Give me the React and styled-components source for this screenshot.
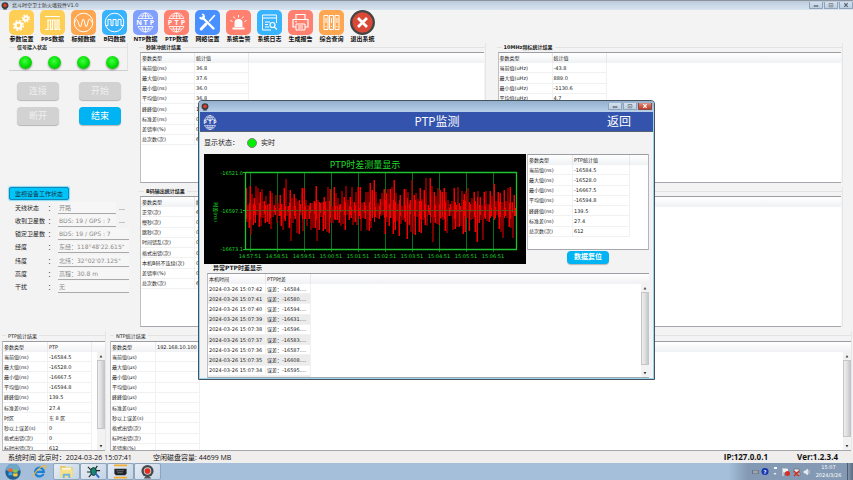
import React from 'react';
import styled, { createGlobalStyle, css } from 'styled-components';

const latin = '"DejaVu Sans", "Noto Sans CJK SC", sans-serif';
const ui = '"Open Sans", "Noto Sans CJK SC", sans-serif';

const pulseRows = [
  ['当前值(ns)', '36.8'],
  ['最大值(ns)', '37.6'],
  ['最小值(ns)', '36.0'],
  ['平均值(ns)', '36.8'],
  ['峰峰值(ns)', '1.6'],
  ['标准差(ns)', '0.4'],
  ['差错率(%)', '0'],
  ['总次数(次)', '612'],
];

const freqRows = [
  ['当前值(uHz)', '-43.8'],
  ['最大值(uHz)', '889.0'],
  ['最小值(uHz)', '-1130.6'],
  ['平均值(uHz)', '4.7'],
  ['峰峰值(uHz)', ''],
  ['标准差(uHz)', ''],
  ['差错率(%)', ''],
  ['总次数(次)', ''],
];

const codeRows = [
  ['正常(次)', '612'],
  ['慢秒(次)', '0'],
  ['跳秒(次)', '0'],
  ['时间错乱(次)', '0'],
  ['格式出错(次)', '0'],
  ['本机B码不连续(次)', '0'],
  ['差错率(%)', '0'],
  ['总次数(次)', '612'],
];

const ptpRows = [
  ['当前值(ns)', '-16584.5'],
  ['最大值(ns)', '-16528.0'],
  ['最小值(ns)', '-16667.5'],
  ['平均值(ns)', '-16594.8'],
  ['峰峰值(ns)', '139.5'],
  ['标准差(ns)', '27.4'],
  ['时区', '东 8 区'],
  ['秒以上误差(s)', '0'],
  ['格式出错(次)', '0'],
  ['标时出错(次)', '612'],
];

const ntpRows = [
  '当前值(μs)',
  '最大值(μs)',
  '最小值(μs)',
  '平均值(μs)',
  '峰峰值(μs)',
  '标准差(μs)',
  '秒以上误差(s)',
  '格式出错(次)',
  '标时出错(次)',
  '差错率(%)',
].map((name) => [name, '']);

const monitorRows = [...ptpRows.slice(0, 6), ['总次数(次)', '612']];

const errorRows = [
  ['2024-03-26 15:07:42', '误差：-16584....'],
  ['2024-03-26 15:07:41', '误差：-16580....'],
  ['2024-03-26 15:07:40', '误差：-16594....'],
  ['2024-03-26 15:07:39', '误差：-16631....'],
  ['2024-03-26 15:07:38', '误差：-16596....'],
  ['2024-03-26 15:07:37', '误差：-16583....'],
  ['2024-03-26 15:07:36', '误差：-16587....'],
  ['2024-03-26 15:07:35', '误差：-16608....'],
  ['2024-03-26 15:07:34', '误差：-16595....'],
  ['', ''],
];

const deviceFields = [
  { id: 'antenna', label: '天线状态', value: '开路', more: true },
  { id: 'received', label: '收到卫星数', value: 'BDS: 19 / GPS : 7', more: true },
  { id: 'locked', label: '锁定卫星数', value: 'BDS: 19 / GPS : 7' },
  { id: 'longitude', label: '经度', value: '东经：118°48\'22.615"' },
  { id: 'latitude', label: '纬度', value: '北纬：32°02\'07.125"' },
  { id: 'altitude', label: '高度', value: '高程：30.8 m' },
  { id: 'jamming', label: '干扰', value: '无' },
];

function Globe({ text }) {
  return (
    <>
      <g fill="none" stroke="currentColor" strokeWidth="0.8">
        <path d="M5 8.500C6.500 5 9.300 3 12.500 3s6 2 7.500 5.500zM5 16.500C6.500 20 9.300 22 12.500 22s6-2 7.500-5.500z" />
        <path d="M9 8.500c.6-3 2-5.500 3.500-5.500S15.400 5.500 16 8.500M9 16.500c.6 3 2 5.500 3.500 5.500s2.900-2.500 3.500-5.500" />
        <path d="M12.500 3v5.500M12.500 16.500V22M7 6h11M7 19h11" />
      </g>
      <g fill="currentColor" fontSize="7" fontWeight="700" textAnchor="middle">
        {text.split('').map((letter, i) => (
          <text key={i} x={6 + i * 6.5} y="15">{letter}</text>
        ))}
      </g>
    </>
  );
}

const line = { fill: 'none', stroke: '#fff', strokeWidth: 1.2 };

const tools = [
  {
    label: '参数设置',
    color: '#ffcf55',
    icon: (
      <g fill="none" stroke="#fff">
        <circle cx="9.500" cy="15.500" r="3" strokeWidth="2.200" />
        <circle cx="9.500" cy="15.500" r="4.800" strokeWidth="1.500" strokeDasharray="2 1.770" />
        <circle cx="16.800" cy="8.500" r="2" strokeWidth="1.800" />
        <circle cx="16.800" cy="8.500" r="3.500" strokeWidth="1.300" strokeDasharray="1.500 1.250" />
      </g>
    ),
  },
  {
    label: 'PPS数据',
    color: '#ffcf55',
    icon: <path {...line} d="M5 6.500h15M5 19.500h3V10h2.500v9.500h2V10H15v9.500h2V10h2v9.500h1.500" />,
  },
  {
    label: '标频数据',
    color: '#ffa750',
    icon: (
      <g {...line} strokeWidth="1">
        <circle cx="12.500" cy="12.500" r="9.300" />
        <path d="M3.500 13c1-3 2-4.500 3-2.500l2 5.500c.5 1 1 1 1.500 0l1.500-6c.5-1 1-1 1.500 0l1.500 6c.5 1 1 1 1.500 0l1.500-6c1-2 2.500 0 3.500 2.500" />
      </g>
    ),
  },
  {
    label: 'B码数据',
    color: '#38b4ff',
    icon: (
      <g {...line} strokeWidth="1">
        <circle cx="12.500" cy="12.500" r="9.300" />
        <path d="M3.500 15.500H6v-6h3v6h2v-6h3v6h2v-6h3v6h2.500" />
      </g>
    ),
  },
  { label: 'NTP数据', color: '#809fff', icon: <Globe text="NTP" /> },
  { label: 'PTP数据', color: '#ff806f', icon: <Globe text="PTP" /> },
  {
    label: '网络设置',
    color: '#488fff',
    icon: (
      <g fill="none" stroke="#fff" strokeLinecap="round">
        <path d="M7.500 7.500l11 11" strokeWidth="2.400" />
        <path d="M5.200 7.700c1.300 2 4 1.300 3.900-1.300 0-.9-.6-1.600-1.300-1.900" strokeWidth="1.800" />
        <path d="M19.500 5.500l-5 5.500" strokeWidth="1.600" />
        <path d="M11 14l-4.800 5" strokeWidth="3" />
      </g>
    ),
  },
  {
    label: '系统告警',
    color: '#ff806f',
    icon: (
      <>
        <path fill="#fff" d="M8.500 17v-4a4 4 0 0 1 8 0v4zM6.500 17.500h12v2h-12z" />
        <path {...line} strokeWidth="1" d="M12.500 5v2.500M7.500 6.500L9 8.500M17.500 6.500L16 8.500M4.500 10.500l2 1M20.500 10.500l-2 1" />
      </>
    ),
  },
  {
    label: '系统日志',
    color: '#38b4ff',
    icon: (
      <g {...line}>
        <path d="M19.500 13V5h-14v15H14M5.500 8h14M8 12h5M8 14.500h3M8 17h4" strokeWidth="1" />
        <circle cx="15.500" cy="15" r="2.500" />
        <path d="M17.300 16.800l2.500 2.700" />
      </g>
    ),
  },
  {
    label: '生成报告',
    color: '#ff806f',
    icon: (
      <g {...line}>
        <path d="M8 9.500V4.500h9v5M8 17H5V9.500h15V17h-3" />
        <path d="M8 14h9v6H8zM10 16h5M10 18h5M7 11.800h2" strokeWidth="1" />
      </g>
    ),
  },
  {
    label: '综合查询',
    color: '#ffa750',
    icon: (
      <g {...line} strokeWidth="1">
        <path d="M5 5.500h4v14H5zM10.500 5.500h4v14h-4zM16 5.500h4v14h-4z" />
        <path d="M7 8v5M12.500 8v5M18 8v5M6.500 16.500h1M12 16.500h1M17.500 16.500h1" />
      </g>
    ),
  },
  {
    label: '退出系统',
    color: 'transparent',
    icon: (
      <>
        <circle cx="12.500" cy="12.500" r="11.300" fill="#da4936" stroke="#454545" strokeWidth="2.300" />
        <path d="M8 8l9 9M17 8l-9 9" stroke="#fff" strokeWidth="2.800" />
      </>
    ),
  },
];

function AppLogo() {
  return (
    <LogoSvg viewBox="0 0 10 10" aria-hidden="true">
      <circle cx="5" cy="4.500" r="4.300" fill="#3a3d40" />
      <circle cx="5" cy="4.200" r="2.300" fill="#e33a25" />
      <path d="M2.500 9.500h5L6.500 8h-3z" fill="#333" />
    </LogoSvg>
  );
}

function CaptionButtons({ danger }) {
  return (
    <Caption.Group>
      <Caption.Button aria-label="最小化">
        <svg viewBox="0 0 8 6">
          <path d="M2 3.500h4v1H2z" fill="#fff" stroke="#59636e" strokeWidth="0.700" />
        </svg>
      </Caption.Button>
      <Caption.Button aria-label="还原">
        <svg viewBox="0 0 8 6">
          <path d="M2.200 1.500h3.600v3.300H2.200zM3.500 2.800h1v.8h-1z" fill="#fff" stroke="#59636e" strokeWidth="0.700" />
        </svg>
      </Caption.Button>
      <Caption.Button aria-label="关闭" $danger={danger}>
        <svg viewBox="0 0 8 6">
          <path d="M2.300 1.200l3.400 3.600M5.700 1.200L2.300 4.800" stroke={danger ? '#fff' : '#59636e'} strokeWidth="1.200" />
        </svg>
      </Caption.Button>
    </Caption.Group>
  );
}

function DataList({ head, rows, height, columns, striped, scroll, thumb }) {
  return (
    <List.Box>
      <List.Clip>
        <List.Table $height={height} $striped={striped}>
          <colgroup>
            <List.Col $width={columns[0]} />
            <List.Col $width={columns[1]} />
            <col />
          </colgroup>
          <thead>
            <tr>
              <th>{head[0]}</th>
              <th>{head[1]}</th>
              <td />
            </tr>
          </thead>
          <tbody>
            {rows.map(([name, value], index) => (
              <tr key={name + index}>
                <td>{name}</td>
                <td>{value}</td>
                <td />
              </tr>
            ))}
          </tbody>
        </List.Table>
      </List.Clip>
      {scroll && (
        <Scroll.Track>
          <Scroll.Cap />
          <Scroll.Arrow>▲</Scroll.Arrow>
          <Scroll.Thumb $size={thumb} />
          <Scroll.Space />
          <Scroll.Arrow>▼</Scroll.Arrow>
        </Scroll.Track>
      )}
    </List.Box>
  );
}

// small seeded generator, so that the trace is the same on every render
function makeTrace() {
  let seed = 4211;
  const next = () => {
    seed = (seed * 16807) % 2147483647;
    return seed / 2147483647;
  };
  const points = [];
  for (let x = 42; x < 312; x += 1) {
    const side = x % 2 ? 1 : -1;
    const size = next() > 0.9 ? 22 + next() * 10 : 4 + next() * 20;
    points.push([x, Math.round(56 + side * size)]);
  }
  return points;
}

const trace = makeTrace();
const tracePath = `M${trace.map((point) => point.join(' ')).join('L')}`;
// strokes that fall on a whole pixel column read brighter
const peakPath = trace
  .filter(([x]) => x % 5 < 2 || x % 7 === 0)
  .map(([x, y]) => `M${x + 0.5} ${y}V${Math.round(56 - (y - 56) * 0.4)}`)
  .join('');

const times = ['14:57:51', '14:58:51', '14:59:51', '15:00:51', '15:01:51', '15:02:51', '15:03:51', '15:04:51', '15:05:51', '15:06:51'];

function Chart() {
  return (
    <ChartSvg viewBox="0 0 322 110" role="img" aria-label="PTP时差测量显示">
      <text x="161" y="14" fontSize="9" textAnchor="middle">PTP时差测量显示</text>
      <g stroke="#0b6b1c">
        {times.map((time, i) => (
          <path key={time} d={`M${46.5 + i * 27} 18v80`} />
        ))}
      </g>
      <path d={tracePath} fill="none" stroke="#a80000" strokeWidth="0.9" />
      <path d={peakPath} stroke="#f40000" />
      <path d="M42 56.500h270" stroke="#6a4a12" />
      <path d="M41.500 18.500H312.500V95.500H41.500z" fill="none" stroke="#1fc32b" strokeWidth="1.300" />
      <path d="M39 18.500h3M39 56.500h3M39 95.500h3" stroke="#1fc32b" />
      <g fontSize="5" textAnchor="end">
        <text x="39" y="21">-16521.0</text>
        <text x="39" y="59">-16597.1</text>
        <text x="39" y="97">-16673.1</text>
      </g>
      <g fontSize="5" textAnchor="middle">
        {times.map((time, i) => (
          <text key={time} x={46 + i * 27} y="104">{time}</text>
        ))}
      </g>
      <text fontSize="5" textAnchor="middle" transform="translate(10 58) rotate(90)">时差(ns)</text>
    </ChartSvg>
  );
}

function PtpDialog() {
  return (
    <Overlay>
      <Dialog.Window role="dialog" aria-label="PTP监测">
        <Dialog.Title>
          <AppLogo />
          <CaptionButtons danger />
        </Dialog.Title>
        <Dialog.Client>
          <Dialog.Header>
            <Dialog.Logo viewBox="3 1 19 23"><Globe text="PTP" /></Dialog.Logo>
            <Dialog.Heading>PTP监测</Dialog.Heading>
            <Dialog.Back>返回</Dialog.Back>
          </Dialog.Header>
          <Dialog.State>
            显示状态：
            <Dialog.Dot />
            实时
          </Dialog.State>
          <Dialog.Monitor>
            <Chart />
            <Dialog.Side>
              <Dialog.Stats>
                <DataList head={['参数类型', 'PTP统计值']} rows={monitorRows} height={82} columns={[45, 57]} />
              </Dialog.Stats>
              <Dialog.Reset>数据复位</Dialog.Reset>
            </Dialog.Side>
          </Dialog.Monitor>
          <Dialog.Errors>
            <Group.Legend $large>异常PTP时差显示</Group.Legend>
            <DataList
              head={['本机时间', 'PTP时差']}
              rows={errorRows}
              height={112}
              columns={[58, 45]}
              striped
              scroll
              thumb={73}
            />
          </Dialog.Errors>
        </Dialog.Client>
      </Dialog.Window>
    </Overlay>
  );
}

function Sidebar() {
  return (
    <Side.Wrapper>
      <Side.Signals>
        <Group.Legend>信号接入状态</Group.Legend>
        <Side.Leds>
          <Side.Led />
          <Side.Led />
          <Side.Led />
          <Side.Led />
        </Side.Leds>
      </Side.Signals>
      <Side.Buttons>
        <Side.Button disabled>连接</Side.Button>
        <Side.Button disabled>开始</Side.Button>
        <Side.Button disabled>断开</Side.Button>
        <Side.Button>结束</Side.Button>
      </Side.Buttons>
      <Side.Monitor>监视设备工作状态</Side.Monitor>
      <Side.Form>
        {deviceFields.map(({ id, label, value, more }) => (
          <Side.Row key={id}>
            <Side.Label htmlFor={id}>
              {label}
              <span>：</span>
            </Side.Label>
            <Side.Input id={id} value={value} readOnly />
            {more && <Side.More aria-label={`${label}详情`}>...</Side.More>}
          </Side.Row>
        ))}
      </Side.Form>
    </Side.Wrapper>
  );
}

function Taskbar() {
  return (
    <Task.Bar>
      <Task.Start aria-label="开始菜单">
        <svg viewBox="0 0 16 16">
          <circle cx="8" cy="8" r="7.700" fill="#235f91" />
          <path d="M1 6a7 7 0 0 1 14 0c-4 2-10 2-14 0z" fill="#6ea6c9" />
          <path d="M3.500 5c1.500-.9 2.800-.8 4 0v3c-1.300-.8-2.600-.8-4 0z" fill="#f0642c" />
          <path d="M8.200 5.200c1.500.8 2.800.8 4.300 0v3c-1.500.8-2.900.7-4.300 0z" fill="#8fc840" />
          <path d="M3.500 8.700c1.400-.8 2.700-.8 4 0v3c-1.300-.8-2.600-.8-4 0z" fill="#3da7ea" />
          <path d="M8.200 8.900c1.400.7 2.800.8 4.300 0v3c-1.500.8-2.900.7-4.300 0z" fill="#fbc932" />
        </svg>
      </Task.Start>
      <Task.Item aria-label="Internet Explorer">
        <svg viewBox="0 0 16 16">
          <path d="M12.300 10.500A4.700 4.700 0 1 1 12.700 8.500H4.500" fill="none" stroke="#1c7fd6" strokeWidth="2.400" />
          <path d="M2 14c-2-3 8-13 12.500-12 1 .5.500 2-.5 3.500" fill="none" stroke="#f0b92f" strokeWidth="1.200" />
        </svg>
      </Task.Item>
      <Task.Item $open aria-label="资源管理器">
        <svg viewBox="0 0 16 16">
          <path d="M1.500 2h5l1 1.500h7V14h-13z" fill="#e9c65b" />
          <path d="M3 4h10v5H3z" fill="#fff8dc" />
          <path d="M1.500 6h13v8h-13z" fill="#f8e18d" />
          <path d="M4 10.500h8V15h-2v-2.500H6V15H4z" fill="#6fb6df" />
        </svg>
      </Task.Item>
      <Task.Item $open aria-label="调试工具">
        <svg viewBox="0 0 16 16">
          <path d="M2 3l4 4M1 8.500h5M3 14l3.500-4M12 2L9.500 6M15 7h-5" stroke="#222" strokeWidth="1.200" />
          <ellipse cx="8" cy="8" rx="3" ry="4.200" fill="#168873" stroke="#17332f" />
          <path d="M10 10l4 4.500" stroke="#2864c7" strokeWidth="2" />
        </svg>
      </Task.Item>
      <Task.Item $open aria-label="串口工具">
        <svg viewBox="0 0 16 16">
          <path d="M1 1.500h14M1 14.500h14" stroke="#f4ad32" strokeWidth="1.800" />
          <path d="M1.500 5h13v5l-1.500 2H3l-1.500-2z" fill="#202528" />
          <path d="M4 7.200h8M5 9.300h6" stroke="#d9e0e4" strokeWidth="0.800" strokeDasharray="1 1" />
        </svg>
      </Task.Item>
      <Task.Item $open aria-label="北斗时空卫士">
        <svg viewBox="0 0 16 16">
          <circle cx="8" cy="7.500" r="6.500" fill="#45484b" />
          <circle cx="8" cy="7.500" r="4" fill="#c8cccf" />
          <circle cx="8" cy="7.500" r="3" fill="#e32d20" />
          <path d="M4 15.500h8l-1.500-2h-5z" fill="#555" />
        </svg>
      </Task.Item>
      <Task.Tray>
        <Task.TrayIcons viewBox="0 0 58 10" aria-hidden="true">
          <path d="M0 3h7v4H0z" fill="#687684" />
          <path d="M1 4.200h5M1 5.800h5" stroke="#ccd4dc" strokeWidth="0.700" />
          <circle cx="13" cy="4.500" r="3.500" fill="#1738b0" />
          <text x="13" y="6.500" fontSize="5" fontWeight="700" fill="#fff" textAnchor="middle">?</text>
          <path d="M22 0h3v2h-3zM21.500 6h3L23 8z" fill="#f3f6f9" />
          <path d="M31 1v8M31.500 2h4v3h-4z" stroke="#eee" fill="#eee" />
          <circle cx="35.500" cy="6.500" r="2.500" fill="#d92d24" />
          <path d="M42 2h5v4h-5zM44 6h4v2h-4z" fill="#e2e6ea" stroke="#555" strokeWidth="0.500" />
          <path d="M42 4l5 5M47 4l-5 5" stroke="#d92d24" strokeWidth="1.300" />
          <path d="M52 4h1.500l2-2v6l-2-2H52zM57 3v4" fill="#e9eef3" stroke="#e9eef3" strokeWidth="0.700" />
        </Task.TrayIcons>
        <Task.Clock>
          <span>15:07</span>
          <span>2024/3/26</span>
        </Task.Clock>
        <Task.Desktop aria-label="显示桌面" />
      </Task.Tray>
    </Task.Bar>
  );
}

export default function App() {
  return (
    <Page>
      <GlobalStyle />
      <TitleBar>
        <AppLogo />
        <TitleText>北斗时空卫士防火墙软件V1.0</TitleText>
        <CaptionButtons />
      </TitleBar>
      <Toolbar.Wrapper>
        {tools.map(({ label, color, icon }) => (
          <Toolbar.Button key={label}>
            <Toolbar.Icon viewBox="0 0 25 25" $color={color}>{icon}</Toolbar.Icon>
            {label}
          </Toolbar.Button>
        ))}
      </Toolbar.Wrapper>
      <Middle>
        <Sidebar />
        <Results>
          <Group.Box>
            <Group.Legend>秒脉冲统计结果</Group.Legend>
            <DataList head={['参数类型', '统计值']} rows={pulseRows} height={92} columns={[54, 54]} />
          </Group.Box>
          <Group.Box>
            <Group.Legend>10MHz频标统计结果</Group.Legend>
            <DataList head={['参数类型', '统计值']} rows={freqRows} height={92} columns={[54, 54]} />
          </Group.Box>
          <Group.Box>
            <Group.Legend>B码输出统计结果</Group.Legend>
            <DataList head={['参数类型', '统计值']} rows={codeRows} height={92} columns={[54, 54]} />
          </Group.Box>
          <Group.Box>
            <DataList head={['', '']} rows={[]} height={10} columns={[54, 54]} />
          </Group.Box>
        </Results>
      </Middle>
      <Bottom>
        <Group.Box $deep>
          <Group.Legend $light>PTP统计结果</Group.Legend>
          <DataList head={['参数类型', 'PTP']} rows={ptpRows} height={112} columns={[45, 44]} scroll thumb={69} />
        </Group.Box>
        <Group.Box $deep>
          <Group.Legend $light>NTP统计结果</Group.Legend>
          <DataList head={['参数类型', '192.168.10.100']} rows={ntpRows} height={112} columns={[45, 44]} scroll thumb={77} />
        </Group.Box>
      </Bottom>
      <Status.Bar>
        <Status.Time>系统时间 北京时：2024-03-26 15:07:41</Status.Time>
        <Status.Disk>空闲磁盘容量: 44699 MB</Status.Disk>
        <Status.Strong>IP:127.0.0.1</Status.Strong>
        <Status.Strong>Ver:1.2.3.4</Status.Strong>
      </Status.Bar>
      <Taskbar />
      <PtpDialog />
    </Page>
  );
}

const GlobalStyle = createGlobalStyle`
  * {
    box-sizing: border-box;
  }

  body {
    margin: 0;
    font-family: ${latin};
    font-size: 5px;
    line-height: 1;
    color: #222;
    background: #f3f3f3;
  }

  button, input {
    margin: 0;
    padding: 0;
    border: 0;
    background: none;
    font: inherit;
    color: inherit;
  }

  svg {
    display: block;
  }
`;

const Page = styled.div`
  height: 100vh;
  display: flex;
  flex-direction: column;
`;

const LogoSvg = styled.svg`
  width: 8px;
  height: 8px;
`;

const TitleBar = styled.header`
  flex: none;
  height: 10px;
  display: flex;
  align-items: center;
  gap: 3px;
  padding-left: 1px;
  border-top: 1px solid #8b949e;
  background: linear-gradient(#bccbdc, #d8e4f1);
`;

const TitleText = styled.span`
  flex: 1;
  color: #333;
`;

const Caption = {
  Group: styled.div`
    display: flex;
    gap: 1px;
    margin-left: auto;
  `,
  Button: styled.button`
    width: 14px;
    height: 7px;
    display: flex;
    align-items: center;
    justify-content: center;
    border: 1px solid ${({ $danger }) => ($danger ? '#8c4a48' : '#8fa4ba')};
    border-top: 0;
    border-radius: 0 0 1px 1px;
    background: ${({ $danger }) => ($danger ? 'linear-gradient(#dc9285, #c23a22)' : 'linear-gradient(#d3e0ee, #bccfe2)')};

    svg {
      width: 8px;
      height: 6px;
    }
  `,
};

const Toolbar = {
  Wrapper: styled.nav`
    flex: none;
    height: 33px;
    display: flex;
    gap: 4px;
    padding-left: 8px;
  `,
  Button: styled.button`
    width: 27px;
    display: flex;
    flex-direction: column;
    align-items: center;
    gap: 1px;
    font-family: ${ui};
    font-size: 6px;
    font-weight: 700;
    line-height: 6px;
    white-space: nowrap;
    color: #111;
  `,
  Icon: styled.svg`
    width: 25px;
    height: 25px;
    flex: none;
    border-radius: 5px;
    color: #fff;
    background: ${({ $color }) => $color};
  `,
};

const Middle = styled.main`
  flex: 1;
  min-height: 0;
  display: flex;
`;

const Results = styled.div`
  flex: 1;
  min-width: 0;
  display: grid;
  grid-template-columns: 1fr 1fr;
  grid-template-rows: 1fr 1fr;
  gap: 4px 11px;
  padding: 0 10px 4px 0;
`;

const Group = {
  Box: styled.section`
    min-width: 0;
    min-height: 0;
    display: flex;
    flex-direction: column;
    padding: ${({ $deep }) => ($deep ? '10px 0 0' : '9px 1px 0')};
    background: linear-gradient(#e2e2e2, #e2e2e2) 0 4px / 100% 1px no-repeat;
    border-right: 1px solid #e6e6e6;
  `,
  Legend: styled.h2`
    align-self: flex-start;
    height: 9px;
    margin: -9px 0 0 4px;
    padding: 0 2px;
    font-size: ${({ $large }) => ($large ? 6 : 5)}px;
    font-weight: ${({ $light }) => ($light ? 400 : 700)};
    line-height: 8px;
    white-space: nowrap;
    background: #f3f3f3;
  `,
};

const List = {
  Box: styled.div`
    flex: 1;
    min-height: 0;
    display: flex;
    border-top: 1px solid #9b9da2;
    border-left: 1px solid #bdbfc4;
    border-bottom: 1px solid #a5a7ac;
    background: #fff;
  `,
  Clip: styled.div`
    flex: 1;
    min-width: 0;
    overflow: hidden;
  `,
  Col: styled.col`
    width: ${({ $width }) => $width}px;
  `,
  Table: styled.table`
    width: 100%;
    height: ${({ $height }) => $height}px;
    table-layout: fixed;
    border-collapse: separate;
    border-spacing: 0;

    th, td {
      height: 10px;
      padding: 0 0 0 1px;
      overflow: hidden;
      font-weight: 400;
      line-height: 8px;
      text-align: left;
      white-space: nowrap;
    }

    th, thead td {
      background: linear-gradient(#fff, #f0f1f3);
    }

    th {
      border-right: 1px solid #e8e8ea;
    }

    tbody td:not(:last-child) {
      border-right: 1px solid #f1f1f1;
      border-bottom: 1px solid #f1f1f1;
    }

    ${({ $striped }) => $striped && css`
      tbody tr:nth-child(even) td:not(:last-child) {
        background: #ececec;
      }
    `}
  `,
};

const Scroll = {
  Track: styled.div`
    flex: none;
    width: 8px;
    display: flex;
    flex-direction: column;
    align-items: stretch;
    background: #f2f2f2;
  `,
  Cap: styled.div`
    height: 10px;
    background: linear-gradient(#fff, #f0f1f3);
  `,
  Arrow: styled.span`
    height: 8px;
    font-size: 3px;
    line-height: 8px;
    text-align: center;
  `,
  Thumb: styled.div`
    height: ${({ $size }) => $size}px;
    border: 1px solid #c5c5c7;
    background: linear-gradient(90deg, #eeeeee, #dedfe1 50%, #c6c7cc);
  `,
  Space: styled.div`
    flex: 1;
  `,
};

const Side = {
  Wrapper: styled.aside`
    flex: none;
    width: 139px;
    padding-left: 9px;
  `,
  Signals: styled.section`
    width: 119px;
    height: 28px;
    display: flex;
    flex-direction: column;
    padding-top: 9px;
    border-right: 1px solid #e2e2e2;
    border-bottom: 1px solid #cfcfcf;
    background: linear-gradient(#e2e2e2, #e2e2e2) 0 4px / 100% 1px no-repeat;

    h2 {
      margin-left: 6px;
    }
  `,
  Leds: styled.div`
    display: flex;
    justify-content: space-between;
    padding: 4px 8px 0 10px;
  `,
  Led: styled.span`
    width: 13px;
    height: 13px;
    border-radius: 50%;
    background: radial-gradient(circle at 45% 38%, #3dff3d, #07e007 50%, #0b9a0b);
    box-shadow: 0 1px 2px #888;
  `,
  Buttons: styled.div`
    display: grid;
    grid-template-columns: 42px 42px;
    gap: 7px 20px;
    padding: 11px 0 0 8px;
  `,
  Button: styled.button`
    height: 18px;
    border-radius: 4px;
    font-family: ${ui};
    font-size: 9px;
    line-height: 18px;
    color: #fff;
    background: #00b3f2;
    box-shadow: 0 1px 1px #b5b5b5;

    &:disabled {
      color: #f0f0f0;
      background: #d2d2d2;
    }
  `,
  Monitor: styled.button`
    display: block;
    width: 60px;
    height: 13px;
    margin-top: 62px;
    border: 1px solid #1387b5;
    border-radius: 2px;
    font-size: 6px;
    line-height: 11px;
    white-space: nowrap;
    color: #12303d;
    background: #00c5fa;
    box-shadow: 0 0 1px 1px #8adcf5;
  `,
  Form: styled.div`
    height: 93px;
    display: flex;
    flex-direction: column;
    margin-top: 1px;
    padding-left: 6px;
    font-size: 6px;
  `,
  Row: styled.div`
    flex: 1;
    display: flex;
    align-items: center;
  `,
  Label: styled.label`
    flex: none;
    width: 43px;
    display: flex;
    justify-content: space-between;
    padding-right: 4px;
  `,
  Input: styled.input`
    flex: 1;
    min-width: 0;
    height: 12px;
    margin-right: 10px;
    padding-left: 1px;
    border-bottom: 1px solid #a9a9a9;
    background: #f6f6f6;
    color: #8b8b8b;

    &:not(:last-child) {
      margin-right: 3px;
    }
  `,
  More: styled.button`
    width: 20px;
    text-align: left;
  `,
};

const Bottom = styled.section`
  flex: none;
  height: 120px;
  display: grid;
  grid-template-columns: 104px 1fr;
  gap: 4px;
  padding: 0 1px 0 2px;
`;

const Status = {
  Bar: styled.footer`
    flex: none;
    height: 12px;
    display: flex;
    align-items: center;
    padding: 0 15px 0 8px;
    font-family: ${ui};
    font-size: 7px;
    color: #111;
    background: #f0eded;
  `,
  Time: styled.span`
    width: 145px;
  `,
  Disk: styled.span`
    flex: 1;
  `,
  Strong: styled.strong`
    margin-left: 29px;
    font-size: 8px;
    font-weight: 700;
  `,
};

const Task = {
  Bar: styled.footer`
    flex: none;
    height: 17px;
    display: flex;
    align-items: stretch;
    background: #a5bfdb;
  `,
  Start: styled.button`
    width: 26px;
    display: flex;
    justify-content: center;
    align-items: center;

    svg {
      width: 16px;
      height: 16px;
    }
  `,
  Item: styled.button`
    width: 27px;
    display: flex;
    justify-content: center;
    align-items: center;
    border: 1px solid transparent;

    ${({ $open }) => $open && css`
      border-color: #8fa5bc;
      border-radius: 2px;
      background: linear-gradient(135deg, #e6edf5, #c3d4e6);
    `}

    svg {
      width: 15px;
      height: 15px;
    }
  `,
  Tray: styled.div`
    flex: 1;
    display: flex;
    justify-content: flex-end;
    align-items: center;
    background: linear-gradient(90deg, transparent calc(100% - 125px), #8499b3 calc(100% - 105px));
  `,
  TrayIcons: styled.svg`
    width: 58px;
    height: 10px;
  `,
  Clock: styled.div`
    width: 37px;
    display: flex;
    flex-direction: column;
    align-items: center;
    gap: 3px;
    color: #fff;
  `,
  Desktop: styled.button`
    width: 6px;
    height: 100%;
    border-left: 1px solid #4b5d70;
    background: linear-gradient(90deg, #8597a9, #586b80);
  `,
};

const Overlay = styled.div`
  position: fixed;
  inset: 0;
  display: flex;
  align-items: center;
  justify-content: center;
`;

const Dialog = {
  Window: styled.section`
    width: 457px;
    max-width: 100%;
    height: 280px;
    display: flex;
    flex-direction: column;
    border: 1px solid #46525e;
    border-radius: 4px 4px 0 0;
    overflow: hidden;
    background: #9ad3ee;
  `,
  Title: styled.header`
    flex: none;
    height: 11px;
    display: flex;
    align-items: center;
    padding: 0 2px;
    background: linear-gradient(#93b0ce, #b9d0e9);
  `,
  Client: styled.div`
    flex: 1;
    min-height: 0;
    display: flex;
    flex-direction: column;
    margin: 0 1px 1px;
    background: #f3f3f3;
  `,
  Header: styled.div`
    flex: none;
    height: 20px;
    display: grid;
    grid-template-columns: 1fr auto 1fr;
    align-items: center;
    padding: 0 22px 0 3px;
    font-family: ${ui};
    font-size: 12px;
    line-height: 20px;
    color: #fff;
    border-bottom: 1px solid #56606f;
    background: #3453ad;
  `,
  Logo: styled.svg`
    width: 14px;
    height: 17px;
  `,
  Heading: styled.h1`
    margin: 0 0 0 40px;
    font: inherit;
  `,
  Back: styled.button`
    justify-self: end;
  `,
  State: styled.div`
    flex: none;
    height: 22px;
    display: flex;
    align-items: center;
    gap: 4px;
    padding-left: 4px;
    font-size: 7px;
  `,
  Dot: styled.span`
    width: 10px;
    height: 10px;
    margin-left: 4px;
    border: 1px solid #808080;
    border-radius: 50%;
    background: #00f000;
  `,
  Monitor: styled.div`
    flex: none;
    height: 110px;
    display: flex;
    gap: 1px;
    padding: 0 4px;
  `,
  Side: styled.div`
    flex: 1;
    min-width: 0;
    display: flex;
    flex-direction: column;
    align-items: center;
    gap: 1px;
  `,
  Stats: styled.div`
    width: 100%;
    flex: 1;
    min-height: 0;
    display: flex;
    border-right: 1px solid #b5b5b8;
  `,
  Reset: styled.button`
    width: 42px;
    height: 13px;
    border-radius: 4px;
    font-size: 7px;
    font-weight: 700;
    line-height: 13px;
    color: #fff;
    background: #00b3f2;
    box-shadow: 0 1px 1px #b5b5b5;
  `,
  Errors: styled.section`
    flex: 1;
    min-height: 0;
    display: flex;
    flex-direction: column;
    padding: 9px 4px 0 7px;
  `,
};

const ChartSvg = styled.svg`
  flex: none;
  width: 322px;
  max-width: 75%;
  height: 110px;
  font-family: ${latin};
  fill: #1fdc2b;
  background: #000;
`;
